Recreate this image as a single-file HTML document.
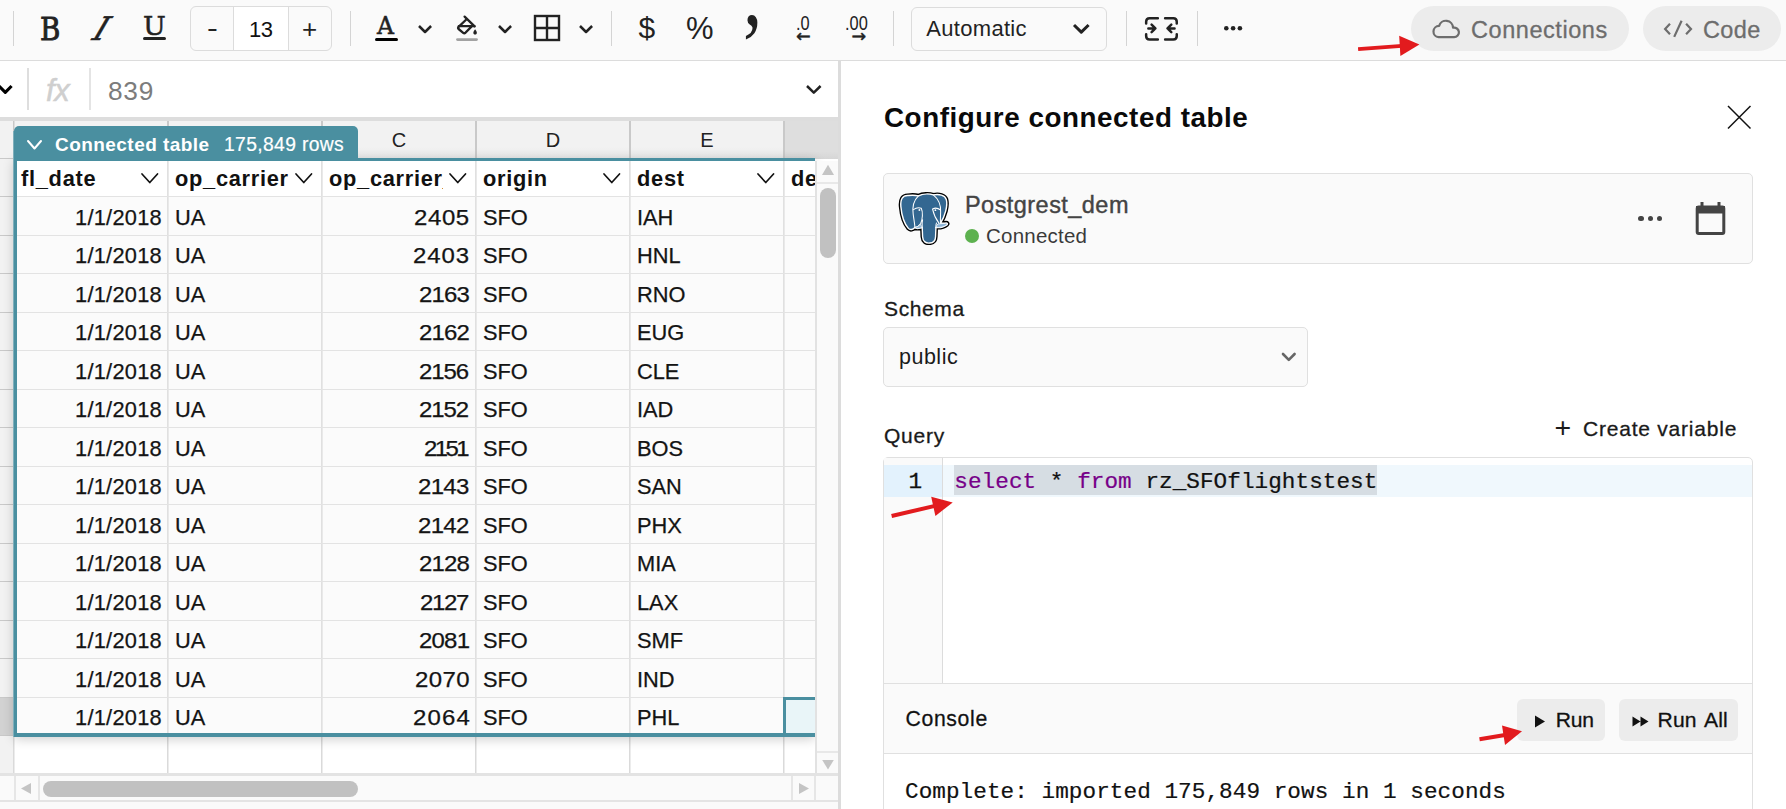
<!DOCTYPE html>
<html lang="en"><head><meta charset="utf-8"><title>Configure connected table</title>
<style>
*{box-sizing:border-box;margin:0;padding:0}
html,body{width:1786px;height:809px;overflow:hidden;background:#fff}
body{position:relative;font-family:"Liberation Sans",sans-serif;color:#111}
.abs{position:absolute}
.tb{left:0;top:0;width:1786px;height:61px;background:#fafafa;border-bottom:1px solid #dcdcdc}
.sep{position:absolute;top:11px;width:1px;height:35px;background:#d4d4d4}
.ico{position:absolute;white-space:nowrap;line-height:1;color:#222}
.pill{position:absolute;top:6px;height:45px;border-radius:23px;background:#ececec}
.pilltxt{position:absolute;font-size:23.5px;line-height:1;color:#6d6d6d;white-space:nowrap;-webkit-text-stroke:.3px #6d6d6d}
.cell{position:absolute;font-size:21.8px;line-height:1;white-space:nowrap;color:#141414;-webkit-text-stroke:.25px #141414}
.hcell{position:absolute;font-size:21.8px;line-height:1;white-space:nowrap;font-weight:bold;color:#111;letter-spacing:.72px}
.colh{position:absolute;top:121px;height:37px;background:linear-gradient(#f2f2f2 70%,#e9e9e9);font-size:20px;line-height:38px;text-align:center;color:#222}
.vl{position:absolute;width:1px;background:#dedede}
.hl{position:absolute;height:1px;background:#e2e2e2}
.mono{font-family:"Liberation Mono",monospace}
.slab{font-family:"DejaVu Serif",serif}
.med{color:#1a1a1a;-webkit-text-stroke:.3px #1a1a1a}
</style></head>
<body>
<div class="abs tb"></div>
<div class="sep" style="left:13px"></div>
<div class="sep" style="left:350px"></div>
<div class="sep" style="left:611px"></div>
<div class="sep" style="left:893px"></div>
<div class="sep" style="left:1126px"></div>
<div class="sep" style="left:1197px"></div>
<div class="ico slab" id="icB" style="left:39.6px;top:14px;font-size:31.5px;-webkit-text-stroke:.9px #222;transform:scaleX(.88);transform-origin:0 0">B</div>
<div class="ico slab" id="icI" style="left:94.6px;top:13px;font-size:32.5px;-webkit-text-stroke:.5px #222;transform:skewX(-30deg)">I</div>
<div class="ico slab" id="icU" style="left:143px;top:13.6px;font-size:25.5px;-webkit-text-stroke:.5px #222;transform:scaleX(1.06);transform-origin:0 0">U</div>
<div class="abs" style="left:143px;top:37px;width:23px;height:3px;background:#222;border-radius:2px"></div>
<div class="abs" style="left:190px;top:6px;width:142px;height:45px;border:1px solid #dcdcdc;border-radius:6px;background:#fafafa"></div>
<div class="abs" style="left:233px;top:7px;width:56px;height:43px;background:#fff;border-left:1px solid #dcdcdc;border-right:1px solid #dcdcdc"></div>
<div class="ico" style="left:207px;top:14.6px;font-size:26px;transform:scaleX(1.25);transform-origin:0 0">-</div>
<div class="ico" style="left:249px;top:18.5px;font-size:22px;color:#111;letter-spacing:-.6px">13</div>
<div class="ico" style="left:302px;top:16px;font-size:26px">+</div>
<div class="ico slab" style="left:377px;top:14.5px;font-size:23.5px;-webkit-text-stroke:.5px #222">A</div>
<div class="abs" style="left:375px;top:38px;width:23px;height:3px;background:#000;border-radius:2px"></div>
<svg class="abs" style="left:415.10px;top:22.00px" width="20.10" height="14.00" viewBox="0 0 20.10 14.00"><polyline points="4,4 10.05,10.00 16.10,4" fill="none" stroke="#222" stroke-width="2.5" stroke-linecap="butt" stroke-linejoin="round"/></svg>
<svg class="abs" style="left:450px;top:10px" width="34" height="34" viewBox="450 10 34 34"><g fill="none" stroke="#222" stroke-width="2.3" stroke-linejoin="round" stroke-linecap="round"><path d="M464.6 16.6L474.6 26.4"/><path d="M466.3 19.5L458.6 26.8Q457.5 27.9 458.6 29L463.2 32.8Q464.3 33.7 465.4 32.8L471.4 26.6"/><path d="M458.8 26.2H474.4"/></g><path d="M475.1 29.3q2.6 3.4 1.4 4.6q-1.4 1.3 -2.8 0q-1.2 -1.2 1.4 -4.6z" fill="#222"/><rect x="456.1" y="38.2" width="21.8" height="2.8" rx="1.4" fill="#a2a2a2"/></svg>
<svg class="abs" style="left:495.10px;top:22.00px" width="20.10" height="14.00" viewBox="0 0 20.10 14.00"><polyline points="4,4 10.05,10.00 16.10,4" fill="none" stroke="#222" stroke-width="2.5" stroke-linecap="butt" stroke-linejoin="round"/></svg>
<svg class="abs" style="left:533px;top:14px" width="28" height="28" viewBox="0 0 28 28"><g fill="none" stroke="#222" stroke-width="2.4"><rect x="2" y="2" width="24" height="24"/><path d="M14 2V26M2 14H26"/></g></svg>
<svg class="abs" style="left:576.10px;top:22.00px" width="20.10" height="14.00" viewBox="0 0 20.10 14.00"><polyline points="4,4 10.05,10.00 16.10,4" fill="none" stroke="#222" stroke-width="2.5" stroke-linecap="butt" stroke-linejoin="round"/></svg>
<div class="ico" style="left:638.5px;top:12.5px;font-size:30px">$</div>
<div class="ico" style="left:686px;top:13px;font-size:31px;letter-spacing:0">%</div>
<div class="ico" id="icC" style="left:742.6px;top:-54.6px;font-size:96px;transform:scaleX(.8);transform-origin:0 0;font-family:'Liberation Serif',serif">,</div>
<div class="ico" style="left:795.6px;top:14px;font-size:19.5px;transform:scaleX(.84);transform-origin:0 0">.0</div>
<div class="ico" style="left:796px;top:27.6px;font-size:17.5px;font-family:'DejaVu Sans',sans-serif;-webkit-text-stroke:.4px #222">&#8592;</div>
<div class="ico" style="left:844.6px;top:14px;font-size:19.5px;transform:scaleX(.84);transform-origin:0 0">.00</div>
<div class="ico" style="left:851.6px;top:27.6px;font-size:17.5px;font-family:'DejaVu Sans',sans-serif;-webkit-text-stroke:.4px #222">&#8594;</div>
<div class="abs" style="left:911px;top:7px;width:196px;height:44px;border:1px solid #dcdcdc;border-radius:6px;background:#fafafa"></div>
<div class="ico" style="left:926.3px;top:17.6px;font-size:22px;color:#222;letter-spacing:.3px">Automatic</div>
<svg class="abs" style="left:1070.30px;top:20.90px" width="22.60" height="15.20" viewBox="0 0 22.60 15.20"><polyline points="4,4 11.30,11.20 18.60,4" fill="none" stroke="#222" stroke-width="3" stroke-linecap="butt" stroke-linejoin="round"/></svg>
<svg class="abs" style="left:1140px;top:12px" width="44" height="34" viewBox="1140 12 44 34"><g fill="none" stroke="#222" stroke-width="2.5" stroke-linecap="round" stroke-linejoin="round"><path d="M1157.85 18.25H1149.6Q1146.15 18.25 1146.15 21.7V23.4M1146.15 34.25V36Q1146.15 39.45 1149.6 39.45H1157.85M1165.1 18.25H1173.3Q1176.75 18.25 1176.75 21.7V23.4M1176.75 34.25V36Q1176.75 39.45 1173.3 39.45H1165.1"/><path d="M1148.35 28.4H1155.2M1151.6 24.6L1155.4 28.4L1151.6 32.2M1174.55 28.4H1167.7M1171.3 24.6L1167.5 28.4L1171.3 32.2"/></g></svg>
<svg class="abs" style="left:1220px;top:22px" width="26" height="12" viewBox="1220 22 26 12"><circle cx="1226.3" cy="28.3" r="2.3" fill="#222"/><circle cx="1233.1" cy="28.3" r="2.3" fill="#222"/><circle cx="1239.9" cy="28.3" r="2.3" fill="#222"/></svg>
<div class="pill" style="left:1411px;width:218px"></div>
<div class="pill" style="left:1643px;width:138px"></div>
<svg class="abs" style="left:1425px;top:12px" width="40" height="32" viewBox="1425 12 40 32"><path d="M1438.65 37.2A5.65 5.65 0 0 1 1439.13 25.92A7.1 7.1 0 0 1 1453.05 27.72A4.8 4.8 0 1 1 1454.1 37.2Z" fill="none" stroke="#6d6d6d" stroke-width="2.2" stroke-linejoin="round"/></svg>
<div class="pilltxt" style="left:1471px;top:18.5px;letter-spacing:.55px">Connections</div>
<svg class="abs" style="left:1658px;top:14px" width="40" height="30" viewBox="1658 14 40 30"><g fill="none" stroke="#6d6d6d" stroke-width="2.2" stroke-linecap="butt" stroke-linejoin="miter"><path d="M1670 23.7L1665.1 29L1670 34.3M1686.1 23.7L1691 29L1686.1 34.3M1681.6 20.75L1674.2 36.9"/></g></svg>
<div class="pilltxt" style="left:1703px;top:18.5px;letter-spacing:.4px">Code</div>
<svg class="abs" style="left:1350px;top:30px" width="80" height="30" viewBox="1350 30 80 30"><path d="M1358.1 49.15 L1402 45.85" stroke="#e21b1e" stroke-width="3.9" fill="none"/><path d="M1419.4 44.4 L1399.2 35.8 L1400.4 56 Z" fill="#e21b1e"/></svg>
<div class="abs" style="left:0;top:61px;width:839px;height:56px;background:#fff"></div>
<div class="abs" style="left:0;top:117px;width:839px;height:4px;background:#dddddd"></div>
<svg class="abs" style="left:-5.50px;top:81.80px" width="20.60" height="14.30" viewBox="0 0 20.60 14.30"><polyline points="4,4 10.30,10.30 16.60,4" fill="none" stroke="#000" stroke-width="3.1" stroke-linecap="butt" stroke-linejoin="round"/></svg>
<div class="abs" style="left:27px;top:68px;width:2px;height:42px;background:#dedede"></div>
<div class="abs" style="left:89px;top:68px;width:2px;height:42px;background:#e4e4e4"></div>
<div class="ico" style="left:46px;top:74.6px;font-size:31px;font-style:italic;color:#cfcfcf;letter-spacing:-.4px;-webkit-text-stroke:.5px #cfcfcf">fx</div>
<div class="ico" style="left:107.6px;top:79.3px;font-size:25px;color:#7c7c7c;letter-spacing:.7px;transform:scaleX(1.05);transform-origin:0 0">839</div>
<svg class="abs" style="left:802.90px;top:82.00px" width="21.60" height="14.60" viewBox="0 0 21.60 14.60"><polyline points="4,4 10.80,10.60 17.60,4" fill="none" stroke="#222" stroke-width="2.5" stroke-linecap="butt" stroke-linejoin="round"/></svg>
<div class="abs" style="left:0;top:122px;width:839px;height:679px;background:#fff"></div>
<div class="abs" style="left:0;top:121px;width:839px;height:38px;background:linear-gradient(#dedede 80%,#d6d6d6)"></div>
<div class="abs" style="left:0;top:121px;width:13px;height:654px;background:#f2f2f2"></div>
<div class="abs" style="left:13px;top:121px;width:1px;height:654px;background:#c8c8c8"></div>
<div class="colh" style="left:15px;width:152px">A</div>
<div class="abs" style="left:167px;top:121px;width:2px;height:37px;background:#c9c9c9"></div>
<div class="colh" style="left:169px;width:152px">B</div>
<div class="abs" style="left:321px;top:121px;width:2px;height:37px;background:#c9c9c9"></div>
<div class="colh" style="left:323px;width:152px">C</div>
<div class="abs" style="left:475px;top:121px;width:2px;height:37px;background:#c9c9c9"></div>
<div class="colh" style="left:477px;width:152px">D</div>
<div class="abs" style="left:629px;top:121px;width:2px;height:37px;background:#c9c9c9"></div>
<div class="colh" style="left:631px;width:152px">E</div>
<div class="abs" style="left:783px;top:121px;width:2px;height:37px;background:#c9c9c9"></div>
<div class="abs" style="left:0;top:697px;width:13px;height:38px;background:#d2d2d2"></div>
<div class="hl" style="left:0;top:158px;width:13px;background:#c9c9c9"></div>
<div class="hl" style="left:0;top:196px;width:13px;background:#c9c9c9"></div>
<div class="hl" style="left:0;top:235px;width:13px;background:#c9c9c9"></div>
<div class="hl" style="left:0;top:273px;width:13px;background:#c9c9c9"></div>
<div class="hl" style="left:0;top:312px;width:13px;background:#c9c9c9"></div>
<div class="hl" style="left:0;top:350px;width:13px;background:#c9c9c9"></div>
<div class="hl" style="left:0;top:389px;width:13px;background:#c9c9c9"></div>
<div class="hl" style="left:0;top:427px;width:13px;background:#c9c9c9"></div>
<div class="hl" style="left:0;top:466px;width:13px;background:#c9c9c9"></div>
<div class="hl" style="left:0;top:504px;width:13px;background:#c9c9c9"></div>
<div class="hl" style="left:0;top:543px;width:13px;background:#c9c9c9"></div>
<div class="hl" style="left:0;top:581px;width:13px;background:#c9c9c9"></div>
<div class="hl" style="left:0;top:620px;width:13px;background:#c9c9c9"></div>
<div class="hl" style="left:0;top:658px;width:13px;background:#c9c9c9"></div>
<div class="hl" style="left:0;top:697px;width:13px;background:#c9c9c9"></div>
<div class="hl" style="left:0;top:735px;width:13px;background:#c9c9c9"></div>
<div class="hl" style="left:0;top:774px;width:13px;background:#c9c9c9"></div>
<div class="vl" style="left:13px;top:159px;height:615px;width:1px;background:#dadada"></div>
<div class="vl" style="left:14px;top:159px;height:615px;width:1px;background:#ececec"></div>
<div class="vl" style="left:167px;top:159px;height:615px;width:1px;background:#dadada"></div>
<div class="vl" style="left:168px;top:159px;height:615px;width:1px;background:#ececec"></div>
<div class="vl" style="left:321px;top:159px;height:615px;width:1px;background:#dadada"></div>
<div class="vl" style="left:322px;top:159px;height:615px;width:1px;background:#ececec"></div>
<div class="vl" style="left:475px;top:159px;height:615px;width:1px;background:#dadada"></div>
<div class="vl" style="left:476px;top:159px;height:615px;width:1px;background:#ececec"></div>
<div class="vl" style="left:629px;top:159px;height:615px;width:1px;background:#dadada"></div>
<div class="vl" style="left:630px;top:159px;height:615px;width:1px;background:#ececec"></div>
<div class="vl" style="left:783px;top:159px;height:615px;width:1px;background:#dadada"></div>
<div class="vl" style="left:784px;top:159px;height:615px;width:1px;background:#ececec"></div>
<div class="abs" style="left:14px;top:158px;width:801px;height:578px;background:#fbfbfb;box-shadow:0 3px 11px rgba(0,0,0,.20)"></div>
<div class="abs" style="left:17px;top:161px;width:798px;height:36px;background:#fff"></div>
<div class="vl" style="left:167px;top:161px;height:573px;width:1px;background:#e0e0e0"></div>
<div class="vl" style="left:168px;top:161px;height:573px;width:1px;background:#e9e9e9"></div>
<div class="vl" style="left:321px;top:161px;height:573px;width:1px;background:#e0e0e0"></div>
<div class="vl" style="left:322px;top:161px;height:573px;width:1px;background:#e9e9e9"></div>
<div class="vl" style="left:475px;top:161px;height:573px;width:1px;background:#e0e0e0"></div>
<div class="vl" style="left:476px;top:161px;height:573px;width:1px;background:#e9e9e9"></div>
<div class="vl" style="left:629px;top:161px;height:573px;width:1px;background:#e0e0e0"></div>
<div class="vl" style="left:630px;top:161px;height:573px;width:1px;background:#e9e9e9"></div>
<div class="vl" style="left:783px;top:161px;height:573px;width:1px;background:#e0e0e0"></div>
<div class="vl" style="left:784px;top:161px;height:573px;width:1px;background:#e9e9e9"></div>
<div class="hl" style="left:17px;top:196px;width:798px;height:1px;background:#e3e3e3"></div>
<div class="hl" style="left:17px;top:235px;width:798px;height:1px;background:#e3e3e3"></div>
<div class="hl" style="left:17px;top:273px;width:798px;height:1px;background:#e3e3e3"></div>
<div class="hl" style="left:17px;top:312px;width:798px;height:1px;background:#e3e3e3"></div>
<div class="hl" style="left:17px;top:350px;width:798px;height:1px;background:#e3e3e3"></div>
<div class="hl" style="left:17px;top:389px;width:798px;height:1px;background:#e3e3e3"></div>
<div class="hl" style="left:17px;top:427px;width:798px;height:1px;background:#e3e3e3"></div>
<div class="hl" style="left:17px;top:466px;width:798px;height:1px;background:#e3e3e3"></div>
<div class="hl" style="left:17px;top:504px;width:798px;height:1px;background:#e3e3e3"></div>
<div class="hl" style="left:17px;top:543px;width:798px;height:1px;background:#e3e3e3"></div>
<div class="hl" style="left:17px;top:581px;width:798px;height:1px;background:#e3e3e3"></div>
<div class="hl" style="left:17px;top:620px;width:798px;height:1px;background:#e3e3e3"></div>
<div class="hl" style="left:17px;top:658px;width:798px;height:1px;background:#e3e3e3"></div>
<div class="hl" style="left:17px;top:697px;width:798px;height:1px;background:#e3e3e3"></div>
<div class="hcell" style="left:21px;top:168px">fl_date</div>
<svg class="abs" style="left:140.2px;top:172.4px" width="19.5" height="12.5" viewBox="0 0 19.5 12.5"><polyline points="2,2 9.75,10.5 17.5,2" fill="none" stroke="#111" stroke-width="1.7" stroke-linecap="round" stroke-linejoin="round"/></svg>
<div class="hcell" style="left:175px;top:168px">op_carrier</div>
<svg class="abs" style="left:294.2px;top:172.4px" width="19.5" height="12.5" viewBox="0 0 19.5 12.5"><polyline points="2,2 9.75,10.5 17.5,2" fill="none" stroke="#111" stroke-width="1.7" stroke-linecap="round" stroke-linejoin="round"/></svg>
<div class="hcell" style="left:329px;top:168px;width:114px;overflow:hidden">op_carrier_fl_num</div>
<svg class="abs" style="left:448.2px;top:172.4px" width="19.5" height="12.5" viewBox="0 0 19.5 12.5"><polyline points="2,2 9.75,10.5 17.5,2" fill="none" stroke="#111" stroke-width="1.7" stroke-linecap="round" stroke-linejoin="round"/></svg>
<div class="hcell" style="left:483px;top:168px">origin</div>
<svg class="abs" style="left:602.2px;top:172.4px" width="19.5" height="12.5" viewBox="0 0 19.5 12.5"><polyline points="2,2 9.75,10.5 17.5,2" fill="none" stroke="#111" stroke-width="1.7" stroke-linecap="round" stroke-linejoin="round"/></svg>
<div class="hcell" style="left:637px;top:168px">dest</div>
<svg class="abs" style="left:756.2px;top:172.4px" width="19.5" height="12.5" viewBox="0 0 19.5 12.5"><polyline points="2,2 9.75,10.5 17.5,2" fill="none" stroke="#111" stroke-width="1.7" stroke-linecap="round" stroke-linejoin="round"/></svg>
<div class="hcell" style="left:791px;top:168px;width:24px;overflow:hidden">de</div>
<div class="cell" style="left:14px;width:148px;text-align:right;letter-spacing:.27px;top:206.6px">1/1/2018</div>
<div class="cell" style="left:175px;top:206.6px">UA</div>
<div class="cell" style="left:414.3px;letter-spacing:0.55px;top:206.6px;transform:scaleX(1.1);transform-origin:0 0">2405</div>
<div class="cell" style="left:483px;top:206.6px">SFO</div>
<div class="cell" style="left:637px;top:206.6px">IAH</div>
<div class="cell" style="left:14px;width:148px;text-align:right;letter-spacing:.27px;top:245.1px">1/1/2018</div>
<div class="cell" style="left:175px;top:245.1px">UA</div>
<div class="cell" style="left:413.3px;letter-spacing:0.86px;top:245.1px;transform:scaleX(1.1);transform-origin:0 0">2403</div>
<div class="cell" style="left:483px;top:245.1px">SFO</div>
<div class="cell" style="left:637px;top:245.1px">HNL</div>
<div class="cell" style="left:14px;width:148px;text-align:right;letter-spacing:.27px;top:283.6px">1/1/2018</div>
<div class="cell" style="left:175px;top:283.6px">UA</div>
<div class="cell" style="left:418.7px;letter-spacing:-0.78px;top:283.6px;transform:scaleX(1.1);transform-origin:0 0">2163</div>
<div class="cell" style="left:483px;top:283.6px">SFO</div>
<div class="cell" style="left:637px;top:283.6px">RNO</div>
<div class="cell" style="left:14px;width:148px;text-align:right;letter-spacing:.27px;top:322.1px">1/1/2018</div>
<div class="cell" style="left:175px;top:322.1px">UA</div>
<div class="cell" style="left:418.7px;letter-spacing:-0.78px;top:322.1px;transform:scaleX(1.1);transform-origin:0 0">2162</div>
<div class="cell" style="left:483px;top:322.1px">SFO</div>
<div class="cell" style="left:637px;top:322.1px">EUG</div>
<div class="cell" style="left:14px;width:148px;text-align:right;letter-spacing:.27px;top:360.6px">1/1/2018</div>
<div class="cell" style="left:175px;top:360.6px">UA</div>
<div class="cell" style="left:419.4px;letter-spacing:-0.99px;top:360.6px;transform:scaleX(1.1);transform-origin:0 0">2156</div>
<div class="cell" style="left:483px;top:360.6px">SFO</div>
<div class="cell" style="left:637px;top:360.6px">CLE</div>
<div class="cell" style="left:14px;width:148px;text-align:right;letter-spacing:.27px;top:399.1px">1/1/2018</div>
<div class="cell" style="left:175px;top:399.1px">UA</div>
<div class="cell" style="left:419.4px;letter-spacing:-0.99px;top:399.1px;transform:scaleX(1.1);transform-origin:0 0">2152</div>
<div class="cell" style="left:483px;top:399.1px">SFO</div>
<div class="cell" style="left:637px;top:399.1px">IAD</div>
<div class="cell" style="left:14px;width:148px;text-align:right;letter-spacing:.27px;top:437.6px">1/1/2018</div>
<div class="cell" style="left:175px;top:437.6px">UA</div>
<div class="cell" style="left:423.8px;letter-spacing:-2.32px;top:437.6px;transform:scaleX(1.1);transform-origin:0 0">2151</div>
<div class="cell" style="left:483px;top:437.6px">SFO</div>
<div class="cell" style="left:637px;top:437.6px">BOS</div>
<div class="cell" style="left:14px;width:148px;text-align:right;letter-spacing:.27px;top:476.1px">1/1/2018</div>
<div class="cell" style="left:175px;top:476.1px">UA</div>
<div class="cell" style="left:418.1px;letter-spacing:-0.60px;top:476.1px;transform:scaleX(1.1);transform-origin:0 0">2143</div>
<div class="cell" style="left:483px;top:476.1px">SFO</div>
<div class="cell" style="left:637px;top:476.1px">SAN</div>
<div class="cell" style="left:14px;width:148px;text-align:right;letter-spacing:.27px;top:514.6px">1/1/2018</div>
<div class="cell" style="left:175px;top:514.6px">UA</div>
<div class="cell" style="left:418.1px;letter-spacing:-0.60px;top:514.6px;transform:scaleX(1.1);transform-origin:0 0">2142</div>
<div class="cell" style="left:483px;top:514.6px">SFO</div>
<div class="cell" style="left:637px;top:514.6px">PHX</div>
<div class="cell" style="left:14px;width:148px;text-align:right;letter-spacing:.27px;top:553.1px">1/1/2018</div>
<div class="cell" style="left:175px;top:553.1px">UA</div>
<div class="cell" style="left:418.7px;letter-spacing:-0.78px;top:553.1px;transform:scaleX(1.1);transform-origin:0 0">2128</div>
<div class="cell" style="left:483px;top:553.1px">SFO</div>
<div class="cell" style="left:637px;top:553.1px">MIA</div>
<div class="cell" style="left:14px;width:148px;text-align:right;letter-spacing:.27px;top:591.6px">1/1/2018</div>
<div class="cell" style="left:175px;top:591.6px">UA</div>
<div class="cell" style="left:420.1px;letter-spacing:-1.20px;top:591.6px;transform:scaleX(1.1);transform-origin:0 0">2127</div>
<div class="cell" style="left:483px;top:591.6px">SFO</div>
<div class="cell" style="left:637px;top:591.6px">LAX</div>
<div class="cell" style="left:14px;width:148px;text-align:right;letter-spacing:.27px;top:630.1px">1/1/2018</div>
<div class="cell" style="left:175px;top:630.1px">UA</div>
<div class="cell" style="left:418.7px;letter-spacing:-0.72px;top:630.1px;transform:scaleX(1.1);transform-origin:0 0">2081</div>
<div class="cell" style="left:483px;top:630.1px">SFO</div>
<div class="cell" style="left:637px;top:630.1px">SMF</div>
<div class="cell" style="left:14px;width:148px;text-align:right;letter-spacing:.27px;top:668.6px">1/1/2018</div>
<div class="cell" style="left:175px;top:668.6px">UA</div>
<div class="cell" style="left:415.0px;letter-spacing:0.34px;top:668.6px;transform:scaleX(1.1);transform-origin:0 0">2070</div>
<div class="cell" style="left:483px;top:668.6px">SFO</div>
<div class="cell" style="left:637px;top:668.6px">IND</div>
<div class="cell" style="left:14px;width:148px;text-align:right;letter-spacing:.27px;top:707.1px">1/1/2018</div>
<div class="cell" style="left:175px;top:707.1px">UA</div>
<div class="cell" style="left:412.6px;letter-spacing:1.07px;top:707.1px;transform:scaleX(1.1);transform-origin:0 0">2064</div>
<div class="cell" style="left:483px;top:707.1px">SFO</div>
<div class="cell" style="left:637px;top:707.1px">PHL</div>
<div class="abs" style="left:783px;top:697px;width:32px;height:39px;background:#e9f5f8;border:3px solid #4a8fa0;border-right:none"></div>
<div class="abs" style="left:14px;top:158px;width:801px;height:3px;background:#4a8fa0"></div>
<div class="abs" style="left:14px;top:158px;width:3px;height:578px;background:#4a8fa0"></div>
<div class="abs" style="left:13px;top:131px;width:1px;height:606px;background:#7fafbb"></div>
<div class="abs" style="left:14px;top:733px;width:801px;height:4px;background:#4a8fa0"></div>
<div class="abs" style="left:14px;top:126px;width:344px;height:33px;background:#4a8fa0;border-radius:5px 5px 0 0"></div>
<svg class="abs" style="left:26px;top:138.5px" width="17" height="11.5" viewBox="0 0 17 11.5"><polyline points="2,2 8.5,9.5 15,2" fill="none" stroke="#fff" stroke-width="2" stroke-linecap="round" stroke-linejoin="round"/></svg>
<div class="ico" style="left:55px;top:135px;font-size:19px;font-weight:bold;color:#fff;letter-spacing:.45px">Connected table</div>
<div class="ico" style="left:224px;top:135px;font-size:19.3px;color:#fff;letter-spacing:.36px;-webkit-text-stroke:.2px #fff">175,849 rows</div>
<div class="abs" style="left:815px;top:161px;width:23px;height:614px;background:#fafafa;border-left:2px solid #e2e2e2"></div>
<div class="abs" style="left:820px;top:188px;width:16px;height:70px;border-radius:8px;background:#c1c1c1"></div>
<svg class="abs" style="left:816px;top:161px" width="22" height="21"><path d="M6.0 14.0 L12 3.8 L18 14.0Z" fill="#c4c4c4"/></svg>
<div class="hl" style="left:817px;top:182px;width:21px;height:2px;background:#e8e8e8"></div>
<div class="hl" style="left:817px;top:751px;width:21px;height:2px;background:#e8e8e8"></div>
<svg class="abs" style="left:816px;top:753px" width="22" height="21"><path d="M6.2 7 L12 16.4 L17.8 7Z" fill="#c4c4c4"/></svg>
<div class="abs" style="left:0;top:773px;width:839px;height:29px;background:#fafafa;border-top:3px solid #e3e3e3;border-bottom:2px solid #e4e4e4"></div>
<div class="abs" style="left:0;top:802px;width:839px;height:7px;background:#fafafa"></div>
<div class="vl" style="left:14px;top:776px;height:24px;width:2px;background:#e6e6e6"></div>
<div class="vl" style="left:38px;top:776px;height:24px;width:2px;background:#e6e6e6"></div>
<div class="vl" style="left:791px;top:776px;height:24px;width:2px;background:#e6e6e6"></div>
<div class="vl" style="left:814px;top:776px;height:24px;width:2px;background:#e6e6e6"></div>
<svg class="abs" style="left:15px;top:777px" width="23" height="24"><path d="M16 6 L6 11.5 L16 17Z" fill="#c4c4c4"/></svg>
<svg class="abs" style="left:792px;top:777px" width="23" height="24"><path d="M7 6 L17 11.5 L7 17Z" fill="#c4c4c4"/></svg>
<div class="abs" style="left:43px;top:781px;width:315px;height:16px;border-radius:8px;background:#c1c1c1"></div>
<div class="abs" style="left:838px;top:61px;width:3px;height:748px;background:#dcdcdc"></div>
<div class="abs" style="left:841px;top:61px;width:945px;height:748px;background:#fff"></div>
<div class="ico" style="left:884px;top:104px;font-size:27.8px;font-weight:bold;color:#0a0a0a;letter-spacing:.55px">Configure connected table</div>
<svg class="abs" style="left:1725px;top:103px" width="28" height="28" viewBox="0 0 28 28"><path d="M3 3L25.5 25.5M25.5 3L3 25.5" stroke="#111" stroke-width="1.5" fill="none"/></svg>
<div class="abs" style="left:883px;top:173px;width:870px;height:91px;background:#fafafa;border:1px solid #e0e0e0;border-radius:5px"></div>
<div class="ico" style="left:965px;top:193.5px;font-size:23.5px;color:#444;letter-spacing:.45px;-webkit-text-stroke:.4px #444">Postgrest_dem</div>
<div class="abs" style="left:965px;top:229px;width:14px;height:14px;border-radius:50%;background:#5db14f"></div>
<div class="ico" style="left:986px;top:226px;font-size:20.5px;color:#3a3a3a;letter-spacing:.22px">Connected</div>
<div class="abs" style="left:1638.3px;top:215.5px;width:5.8px;height:5.8px;border-radius:50%;background:#444"></div>
<div class="abs" style="left:1647.5px;top:215.5px;width:5.8px;height:5.8px;border-radius:50%;background:#444"></div>
<div class="abs" style="left:1656.7px;top:215.5px;width:5.8px;height:5.8px;border-radius:50%;background:#444"></div>
<svg class="abs" style="left:1695px;top:201px" width="31" height="35" viewBox="0 0 31 35"><rect x="2.2" y="6" width="26.6" height="26.5" rx="1.5" fill="none" stroke="#444" stroke-width="3"/><rect x="1" y="5" width="29" height="7.5" fill="#444"/><rect x="5.5" y="1" width="3" height="6" fill="#444"/><rect x="22.5" y="1" width="3" height="6" fill="#444"/></svg>
<svg class="abs" style="left:898.4px;top:191.5px" width="51.8" height="53.6" viewBox="-1.5 -1.5 55 57"><g stroke-linejoin="round" stroke-linecap="round"><path id="eph" d="M9 2.2C3.5 2 0.8 6 1.5 14C2.4 24 5.5 32.5 9.5 37.2C11.5 39.3 14.2 38.6 16.5 36.2C17.5 37.8 20.5 37.6 24.2 36.2L24.6 46C24.9 51.2 28.2 53.2 32.2 52.8C36.2 52.4 38.3 49.8 38.4 46L38.8 36.2C43 36.6 47.6 35.6 50.6 33.2C51.6 32.2 50.8 31.2 49.2 31.4L43.6 31.8C48.6 24 51.6 13 49.8 6.4C48.4 1.8 42.2 0.4 36 1.6C31.6 0.2 24.6 0.4 20.2 2.6C16.4 1.6 12.4 1.8 9 2.2Z" fill="#336791" stroke="#000" stroke-width="4.4"/><path d="M9 2.2C3.5 2 0.8 6 1.5 14C2.4 24 5.5 32.5 9.5 37.2C11.5 39.3 14.2 38.6 16.5 36.2C17.5 37.8 20.5 37.6 24.2 36.2L24.6 46C24.9 51.2 28.2 53.2 32.2 52.8C36.2 52.4 38.3 49.8 38.4 46L38.8 36.2C43 36.6 47.6 35.6 50.6 33.2C51.6 32.2 50.8 31.2 49.2 31.4L43.6 31.8C48.6 24 51.6 13 49.8 6.4C48.4 1.8 42.2 0.4 36 1.6C31.6 0.2 24.6 0.4 20.2 2.6C16.4 1.6 12.4 1.8 9 2.2Z" fill="#336791" stroke="#fff" stroke-width="1.5"/><g fill="none" stroke="#fff" stroke-width="1.1"><path d="M20.2 2.6C15.6 7 13.6 14.5 14.6 22C15.2 27 16 31 16.5 36.2"/><path d="M14.8 17.2C17.5 15.4 20.8 15 23.2 15.8C25.2 20 24.6 27.5 22.6 32C21.6 34 19.5 35.5 16.5 36.2"/><path d="M36 1.6C41.5 6 44.2 13 43.8 20C43.6 24.5 43.4 28 43.6 31.8"/><path d="M43.4 17.4C40.6 15.4 37.4 15.4 35.2 16.6C36.4 22 39 27.6 42 31.6"/><path d="M24.2 36.2C24 33 24 30 24.6 28M38.8 36.2C38.6 34.6 38.8 33 39.4 31.4"/></g><path d="M16.5 36.2C17.5 37.8 20.5 37.6 24.2 36.2C23.4 34.4 22.6 33.4 22 33C20.6 34.8 18.6 35.8 16.5 36.2ZM38.8 36.2C43 36.6 47.6 35.6 50.4 33.2C50.9 32.4 50.4 31.8 49.2 31.9L41 32.4C39.8 33.4 39 34.8 38.8 36.2Z" fill="#8cb4d6" stroke="#fff" stroke-width=".8"/><circle cx="21.2" cy="17.6" r="1" fill="#fff"/><circle cx="38.2" cy="17.8" r="1" fill="#fff"/></g></svg>
<div class="ico med" style="left:884px;top:297.6px;font-size:21px;letter-spacing:.62px">Schema</div>
<div class="abs" style="left:883px;top:327px;width:425px;height:60px;background:#fafafa;border:1px solid #e0e0e0;border-radius:5px"></div>
<div class="ico" style="left:899px;top:347.4px;font-size:21.5px;color:#1a1a1a;letter-spacing:.5px">public</div>
<svg class="abs" style="left:1279.00px;top:349.70px" width="19.60" height="13.80" viewBox="0 0 19.60 13.80"><polyline points="4,4 9.80,9.80 15.60,4" fill="none" stroke="#666" stroke-width="2.6" stroke-linecap="round" stroke-linejoin="round"/></svg>
<div class="ico med" style="left:884px;top:424.6px;font-size:21px;letter-spacing:.75px">Query</div>
<div class="ico" style="left:1554.4px;top:412.6px;font-size:28.5px;color:#1a1a1a">+</div>
<div class="ico med" style="left:1583px;top:417.5px;font-size:21px;letter-spacing:.78px">Create variable</div>
<div class="abs" style="left:883px;top:457px;width:870px;height:360px;background:#fff;border:1px solid #e0e0e0;border-radius:5px 5px 0 0"></div>
<div class="abs" style="left:884px;top:458px;width:58px;height:225px;background:#fafafa"></div>
<div class="abs" style="left:884px;top:465px;width:58px;height:32px;background:#e3f2fd"></div>
<div class="abs" style="left:943px;top:465px;width:809px;height:32px;background:#f0f8fd"></div>
<div class="abs" style="left:954px;top:465px;width:423px;height:30px;background:#d6dde3"></div>
<div class="abs" style="left:942px;top:458px;width:1px;height:225px;background:#dcdcdc"></div>
<div class="ico mono" style="left:908.4px;top:471px;font-size:22.7px;color:#111;-webkit-text-stroke:.3px #111">1</div>
<div class="ico mono" style="left:954.3px;top:471.4px;font-size:22.67px;letter-spacing:.05px;color:#111;-webkit-text-stroke:.22px"><span style="color:#770088">select</span> * <span style="color:#770088">from</span> rz_SFOflightstest</div>
<svg class="abs" style="left:880px;top:490px" width="80" height="35" viewBox="880 490 80 35"><path d="M891.6 516 L936 505.6" stroke="#e21b1e" stroke-width="4" fill="none"/><path d="M952.7 502.4 L931.2 496.8 L935.4 516 Z" fill="#e21b1e"/></svg>
<div class="abs" style="left:884px;top:683px;width:868px;height:71px;background:#fafafa;border-top:1px solid #e0e0e0;border-bottom:1px solid #e0e0e0"></div>
<div class="ico med" style="left:905.5px;top:707.8px;font-size:21.2px;letter-spacing:.66px;color:#111">Console</div>
<div class="abs" style="left:1517px;top:699px;width:88px;height:42px;border-radius:6px;background:#ececec"></div>
<div class="abs" style="left:1619px;top:699px;width:119px;height:42px;border-radius:6px;background:#ececec"></div>
<svg class="abs" style="left:1534px;top:715px" width="12" height="13"><path d="M1 0.5 L11 6.5 L1 12.5Z" fill="#111"/></svg>
<div class="ico" style="left:1555.8px;top:709.4px;font-size:21.1px;color:#111;letter-spacing:-.25px;-webkit-text-stroke:.3px #111">Run</div>
<svg class="abs" style="left:1632px;top:716px" width="18" height="11"><path d="M0.5 0.5 L8.5 5.5 L0.5 10.5Z M8.5 0.5 L16.5 5.5 L8.5 10.5Z" fill="#111"/></svg>
<div class="ico" style="left:1657.6px;top:709.4px;font-size:21.1px;color:#111;letter-spacing:.15px;word-spacing:2.4px;-webkit-text-stroke:.3px #111">Run All</div>
<svg class="abs" style="left:1470px;top:720px" width="60" height="30" viewBox="1470 720 60 30"><path d="M1479.5 739.3 L1508 734.5" stroke="#e21b1e" stroke-width="4" fill="none"/><path d="M1522 731.2 L1502 725.6 L1505 745 Z" fill="#e21b1e"/></svg>
<div class="ico mono" style="left:905px;top:781.4px;font-size:22.67px;letter-spacing:.06px;color:#111;-webkit-text-stroke:.2px #111">Complete: imported 175,849 rows in 1 seconds</div>
</body></html>
